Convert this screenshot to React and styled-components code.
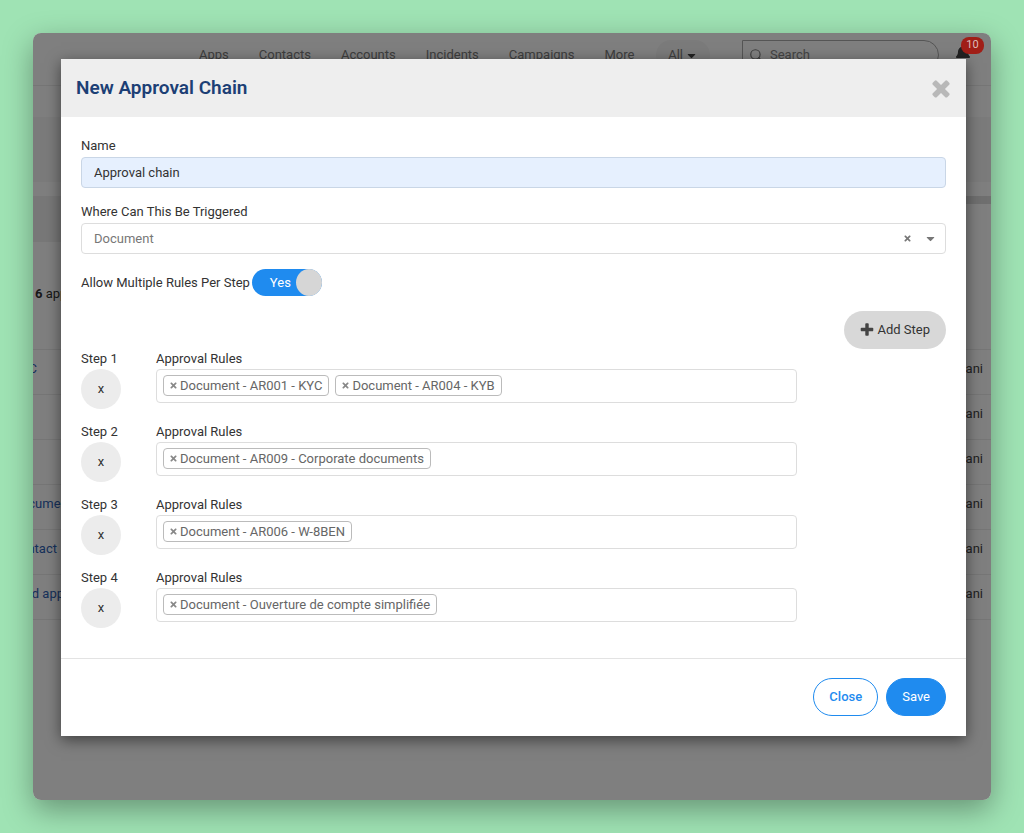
import { useState } from 'react';
import styled, { createGlobalStyle } from 'styled-components';
import { FaBell, FaCaretDown, FaTimes } from 'react-icons/fa';
import { FiSearch } from 'react-icons/fi';

const navItems = ['Apps', 'Contacts', 'Accounts', 'Incidents', 'Campaigns', 'More'];

// reach: how far the end of the name sits from the left edge of the list
const requests = [
    { name: 'KYC', owner: 'Dani', reach: 4 },
    { name: '', owner: 'Dani', reach: 0 },
    { name: '', owner: 'Dani', reach: 0 },
    { name: 'Document', owner: 'Dani', reach: 39 },
    { name: 'Contact', owner: 'Dani', reach: 24 },
    { name: 'Add app', owner: 'Dani', reach: 31 },
];

const initialSteps = [
    ['Document - AR001 - KYC', 'Document - AR004 - KYB'],
    ['Document - AR009 - Corporate documents'],
    ['Document - AR006 - W-8BEN'],
    ['Document - Ouverture de compte simplifiée'],
];

function PlusIcon() {
    return (
        <svg width="16" height="16" viewBox="0 0 1792 1792" fill="#444" aria-hidden="true">
            <path d="M1600 736v192q0 40-28 68t-68 28h-416v416q0 40-28 68t-68 28h-192q-40 0-68-28t-28-68v-416h-416q-40 0-68-28t-28-68v-192q0-40 28-68t68-28h416v-416q0-40 28-68t68-28h192q40 0 68 28t28 68v416h416q40 0 68 28t28 68z" />
        </svg>
    );
}

function CrossIcon() {
    return (
        <svg width="26" height="26" viewBox="0 0 1792 1792" fill="currentColor" aria-hidden="true">
            <path d="M1490 1322q0 40-28 68l-136 136q-28 28-68 28t-68-28l-294-294-294 294q-28 28-68 28t-68-28l-136-136q-28-28-28-68t28-68l294-294-294-294q-28-28-28-68t28-68l136-136q28-28 68-28t68 28l294 294 294-294q28-28 68-28t68 28l136 136q28 28 28 68t-28 68l-294 294 294 294q28 28 28 68z" />
        </svg>
    );
}

function Dashboard() {
    return (
        <Page>
            <Navbar>
                <NavLinks>
                    {navItems.map((item) => (
                        <NavLink href="#" key={item}>
                            {item}
                        </NavLink>
                    ))}
                </NavLinks>
                <Scope type="button">
                    All <FaCaretDown size={13} color="#444" />
                </Scope>
                <SearchBox>
                    <FiSearch size={14} />
                    <SearchInput aria-label="Search" placeholder="Search" />
                </SearchBox>
                <Alerts type="button" aria-label="Notifications">
                    <FaBell size={16} />
                </Alerts>
            </Navbar>
            <Band $height={31} $color="#fff" />
            <Band $height={65} $color="#f6f6f6" />
            <Band $height={14} $color="#fff" />
            <Split>
                <SplitCell $height={46} $color="#f0f0f0" />
                <SplitCell $height={8} $color="#dedede" />
            </Split>
            <Summary>
                <b>6</b>&nbsp;approvals
            </Summary>
            <List>
                {requests.map((request, index) => (
                    <ListRow key={index}>
                        <NameCell $reach={request.reach}>
                            <RowLink href="#">{request.name}</RowLink>
                        </NameCell>
                        <Owner>{request.owner}</Owner>
                    </ListRow>
                ))}
            </List>
        </Page>
    );
}

function App() {
    const [name, setName] = useState('Approval chain');
    const [multiple, setMultiple] = useState(true);
    const [steps, setSteps] = useState(initialSteps);

    const removeStep = (index) => setSteps(steps.filter((_, i) => i !== index));

    return (
        <Desktop>
            <GlobalStyle />
            <Window>
                <Dashboard />
                <Overlay>
                    <Modal role="dialog" aria-labelledby="modal-title">
                        <ModalHeader>
                            <Title id="modal-title">New Approval Chain</Title>
                            <Dismiss type="button" aria-label="Dismiss">
                                <CrossIcon />
                            </Dismiss>
                        </ModalHeader>
                        <ModalBody>
                            <Label htmlFor="name">Name</Label>
                            <NameInput
                                id="name"
                                value={name}
                                onChange={(e) => setName(e.target.value)}
                            />
                            <Label htmlFor="trigger">Where Can This Be Triggered</Label>
                            <SelectBox>
                                <Select id="trigger">
                                    <option>Document</option>
                                </Select>
                                <FaTimes size={9} />
                                <FaCaretDown size={13} />
                            </SelectBox>
                            <ToggleRow>
                                <span>Allow Multiple Rules Per Step</span>
                                <Toggle>
                                    <HiddenCheck
                                        type="checkbox"
                                        aria-label="Allow Multiple Rules Per Step"
                                        checked={multiple}
                                        onChange={(e) => setMultiple(e.target.checked)}
                                    />
                                    {multiple ? 'Yes' : 'No'}
                                    <Knob />
                                </Toggle>
                            </ToggleRow>
                            <AddRow>
                                <AddButton type="button" onClick={() => setSteps([...steps, []])}>
                                    <PlusIcon />
                                    Add Step
                                </AddButton>
                            </AddRow>
                            <Steps>
                                {steps.map((rules, index) => (
                                    <Step key={index}>
                                        <span>Step {index + 1}</span>
                                        <span>Approval Rules</span>
                                        <Remove type="button" onClick={() => removeStep(index)}>
                                            x
                                        </Remove>
                                        <Rules>
                                            {rules.map((rule) => (
                                                <Tag key={rule}>
                                                    <TagRemove type="button" aria-label="Remove rule">
                                                        <FaTimes size={9} />
                                                    </TagRemove>
                                                    {rule}
                                                </Tag>
                                            ))}
                                        </Rules>
                                    </Step>
                                ))}
                            </Steps>
                        </ModalBody>
                        <ModalFooter>
                            <FooterButton type="button">Close</FooterButton>
                            <FooterButton type="button" $primary>
                                Save
                            </FooterButton>
                        </ModalFooter>
                    </Modal>
                </Overlay>
                <Badge>10</Badge>
            </Window>
        </Desktop>
    );
}

export default App;

const GlobalStyle = createGlobalStyle`
    * {
        box-sizing: border-box;
    }

    body {
        margin: 0;
        background: #9fe3b4;
        color: #333;
        font-family: Roboto, sans-serif;
        font-size: 13px;
        line-height: 16px;
    }

    button,
    input,
    select {
        font: inherit;
        color: inherit;
    }

    button {
        padding: 0;
        border: 0;
        background: none;
        cursor: pointer;
    }
`;

const Desktop = styled.main`
    padding: 33px;
`;

const Window = styled.div`
    position: relative;
    display: grid;
    grid-template-columns: minmax(0, 1fr);
    border-radius: 8px;
    box-shadow: 0 10px 30px rgba(0, 0, 0, 0.35);
`;

const Page = styled.div`
    grid-area: 1 / 1;
    overflow: hidden;
    border-radius: 8px;
    background: #fff;
`;

const Navbar = styled.header`
    display: flex;
    align-items: center;
    height: 53px;
    padding: 0 20px 8px 166px;
    border-bottom: 1px solid #ececec;
    color: #7c7c7c;
`;

const NavLinks = styled.nav`
    display: flex;
    flex: 1;
    gap: 30px;
`;

const NavLink = styled.a`
    color: inherit;
    text-decoration: none;
`;

const Scope = styled.button`
    display: flex;
    align-items: center;
    gap: 2px;
    height: 30px;
    margin-right: 32px;
    padding: 0 12px;
    border-radius: 15px;
    background: #f6f6f6;
`;

const SearchBox = styled.div`
    display: flex;
    align-items: center;
    gap: 7px;
    width: 197px;
    height: 30px;
    margin-right: 16px;
    padding: 0 6px;
    border: 1px solid #aaa;
    border-radius: 0 15px 15px 0;
`;

const SearchInput = styled.input`
    flex: 1;
    min-width: 0;
    padding: 0;
    border: 0;
    background: none;

    &::placeholder {
        color: #888;
    }
`;

const Alerts = styled.button`
    color: #444;
`;

const Badge = styled.span`
    position: absolute;
    z-index: 2;
    top: 4px;
    right: 7px;
    width: 23px;
    height: 17px;
    border-radius: 8px;
    background: #a01e17;
    color: #dcbcba;
    font-size: 11px;
    text-align: center;
`;

const Band = styled.div`
    height: ${({ $height }) => $height}px;
    background: ${({ $color }) => $color};
`;

const Split = styled.div`
    display: flex;
    height: 46px;
`;

const SplitCell = styled.div`
    flex: 1;
    height: ${({ $height }) => $height}px;
    background: ${({ $color }) => $color};
`;

const Summary = styled.div`
    height: 107px;
    padding: 44px 2px;
`;

const List = styled.div`
    border-top: 1px solid #ececec;
`;

const ListRow = styled.div`
    display: flex;
    align-items: center;
    justify-content: space-between;
    height: 45px;
    padding-right: 8px;
    padding-bottom: 7px;
    border-bottom: 1px solid #ececec;
`;

const NameCell = styled.div`
    display: flex;
    justify-content: flex-end;
    width: ${({ $reach }) => $reach}px;
`;

const RowLink = styled.a`
    color: #2f62b5;
    text-decoration: none;
    white-space: nowrap;
`;

const Owner = styled.span`
    color: #444;
`;

const Overlay = styled.div`
    z-index: 1;
    grid-area: 1 / 1;
    padding: 26px 25px 64px 28px;
    border-radius: 8px;
    background: rgba(0, 0, 0, 0.5);
`;

const Modal = styled.section`
    background: #fff;
    box-shadow: 0 4px 14px rgba(0, 0, 0, 0.5);
`;

const ModalHeader = styled.header`
    display: flex;
    align-items: center;
    justify-content: space-between;
    height: 58px;
    padding: 0 12px 0 15px;
    background: #eee;
`;

const Title = styled.h1`
    margin: 0;
    color: #1c3f75;
    font-size: 19px;
    font-weight: 600;
    line-height: 24px;
`;

const Dismiss = styled.button`
    display: flex;
    color: #b8b8b8;
`;

const ModalBody = styled.div`
    padding: 21px 20px 30px;
`;

const Label = styled.label`
    display: block;
    margin-bottom: 3px;
`;

const NameInput = styled.input`
    display: block;
    width: 100%;
    height: 31px;
    margin-bottom: 16px;
    padding: 0 12px;
    border: 1px solid #c9d6e6;
    border-radius: 4px;
    background: #e6f0fe;
`;

const SelectBox = styled.div`
    display: flex;
    align-items: center;
    gap: 12px;
    height: 31px;
    padding: 0 8px 0 12px;
    border: 1px solid #ddd;
    border-radius: 4px;
    color: #777;
`;

const Select = styled.select`
    flex: 1;
    padding: 0;
    border: 0;
    background: none;
    appearance: none;
`;

const ToggleRow = styled.div`
    display: flex;
    align-items: center;
    gap: 2px;
    margin-top: 15px;
`;

const Toggle = styled.label`
    display: flex;
    align-items: center;
    justify-content: space-between;
    width: 70px;
    height: 27px;
    padding-left: 18px;
    border-radius: 14px;
    background: #1f8bef;
    color: #fff;
    cursor: pointer;
`;

const HiddenCheck = styled.input`
    position: absolute;
    opacity: 0;
`;

const Knob = styled.span`
    width: 26px;
    height: 27px;
    border-radius: 50%;
    background: #d6d6d6;
`;

const AddRow = styled.div`
    display: flex;
    justify-content: flex-end;
    margin-top: 15px;
`;

const AddButton = styled.button`
    display: flex;
    align-items: center;
    gap: 2px;
    height: 38px;
    padding: 0 16px 0 15px;
    border-radius: 19px;
    background: #d8d8d8;
`;

const Steps = styled.div`
    display: grid;
    gap: 15px;
    margin-top: 2px;
`;

const Step = styled.div`
    display: grid;
    grid-template-columns: 75px minmax(0, 641px);
    gap: 2px 0;
`;

const Remove = styled.button`
    width: 40px;
    height: 40px;
    border-radius: 50%;
    background: #ececec;
`;

const Rules = styled.div`
    display: flex;
    gap: 6px;
    height: 34px;
    padding: 5px 6px;
    border: 1px solid #ddd;
    border-radius: 4px;
`;

const Tag = styled.span`
    display: flex;
    align-items: center;
    gap: 2px;
    height: 21px;
    padding: 0 6px 0 5px;
    border: 1px solid #bbb;
    border-radius: 4px;
    color: #666;
    white-space: nowrap;
`;

const TagRemove = styled.button`
    display: flex;
    color: #888;
`;

const ModalFooter = styled.footer`
    display: flex;
    justify-content: flex-end;
    gap: 8px;
    padding: 19px 20px 20px;
    border-top: 1px solid #e3e3e3;
`;

const FooterButton = styled.button`
    height: 38px;
    padding: 0 15px;
    border: 1px solid #1f8bef;
    border-radius: 19px;
    background: ${({ $primary }) => ($primary ? '#1f8bef' : '#fff')};
    color: ${({ $primary }) => ($primary ? '#fff' : '#1f8bef')};
    font-weight: ${({ $primary }) => ($primary ? 400 : 500)};
`;
